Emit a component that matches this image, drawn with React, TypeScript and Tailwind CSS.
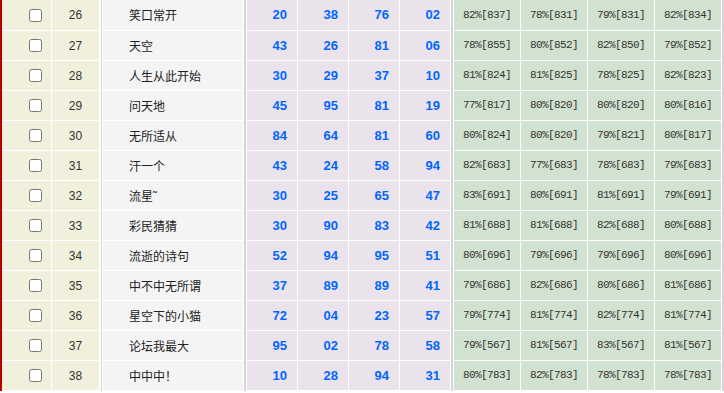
import React from 'react';

type Row = {
  no: number;
  name: string;
  picks: string[];
  rates: string[];
};

const ROWS: Row[] = [
  { no: 26, name: '笑口常开', picks: ['20', '38', '76', '02'], rates: ['82%[837]', '78%[831]', '79%[831]', '82%[834]'] },
  { no: 27, name: '天空', picks: ['43', '26', '81', '06'], rates: ['78%[855]', '80%[852]', '82%[850]', '79%[852]'] },
  { no: 28, name: '人生从此开始', picks: ['30', '29', '37', '10'], rates: ['81%[824]', '81%[825]', '78%[825]', '82%[823]'] },
  { no: 29, name: '问天地', picks: ['45', '95', '81', '19'], rates: ['77%[817]', '80%[820]', '80%[820]', '80%[816]'] },
  { no: 30, name: '无所适从', picks: ['84', '64', '81', '60'], rates: ['80%[824]', '80%[820]', '79%[821]', '80%[817]'] },
  { no: 31, name: '汗一个', picks: ['43', '24', '58', '94'], rates: ['82%[683]', '77%[683]', '78%[683]', '79%[683]'] },
  { no: 32, name: '流星˜', picks: ['30', '25', '65', '47'], rates: ['83%[691]', '80%[691]', '81%[691]', '79%[691]'] },
  { no: 33, name: '彩民猜猜', picks: ['30', '90', '83', '42'], rates: ['81%[688]', '81%[688]', '82%[688]', '80%[688]'] },
  { no: 34, name: '流逝的诗句', picks: ['52', '94', '95', '51'], rates: ['80%[696]', '79%[696]', '79%[696]', '80%[696]'] },
  { no: 35, name: '中不中无所谓', picks: ['37', '89', '89', '41'], rates: ['79%[686]', '82%[686]', '80%[686]', '81%[686]'] },
  { no: 36, name: '星空下的小猫', picks: ['72', '04', '23', '57'], rates: ['79%[774]', '81%[774]', '82%[774]', '81%[774]'] },
  { no: 37, name: '论坛我最大', picks: ['95', '02', '78', '58'], rates: ['79%[567]', '81%[567]', '83%[567]', '81%[567]'] },
  { no: 38, name: '中中中！', picks: ['10', '28', '94', '31'], rates: ['80%[783]', '82%[783]', '78%[783]', '78%[783]'] },
];

function RankRow({ row }: { row: Row }) {
  return (
    <div className="flex h-[30px] first:h-[31px] border-l-2 border-[#b80000] bg-white">
      <div className="flex w-[49px] items-center border-b border-white bg-[#f1f0dc] pl-[27px]">
        <input type="checkbox" className="m-0 h-[13px] w-[13px]" />
      </div>
      <div className="ml-px flex w-[47px] items-center justify-center border-b border-white bg-[#f1f0dc] text-[12px] text-[#333] [font-family:'Liberation_Sans',sans-serif]">
        {row.no}
      </div>
      <div className="ml-[2px] w-px bg-[#d9d9d9]" />
      <div className="ml-px flex w-[140px] items-center border-b border-white bg-[#f4f4f4] pl-[26px] text-[12px] text-[#222] [font-family:'Noto_Sans_CJK_SC',sans-serif]">
        {row.name}
      </div>
      <div className="ml-px w-[2px] bg-[#d4d4d4]" />
      {row.picks.map((p, i) => (
        <div
          key={i}
          className="ml-px flex w-[50px] items-center justify-end border-b border-white bg-[#ebe3eb] pr-[10px] text-[13px] font-bold text-[#0066ff] [font-family:'Liberation_Sans',sans-serif]"
        >
          {p}
        </div>
      ))}
      <div className="ml-px w-[2px] bg-[#d4d4d4]" />
      {row.rates.map((r, i) => (
        <div
          key={i}
          className="ml-px flex w-[66px] items-center justify-center border-b border-white bg-[#d2e2d0] text-[11px] tracking-[-0.6px] text-[#333] [font-family:'Liberation_Mono',monospace]"
        >
          {r}
        </div>
      ))}
      <div className="ml-px w-[2px] bg-[#d4d4d4]" />
    </div>
  );
}

export default function App() {
  return (
    <div className="w-[724px] bg-white">
      {ROWS.map((row) => (
        <RankRow key={row.no} row={row} />
      ))}
    </div>
  );
}
